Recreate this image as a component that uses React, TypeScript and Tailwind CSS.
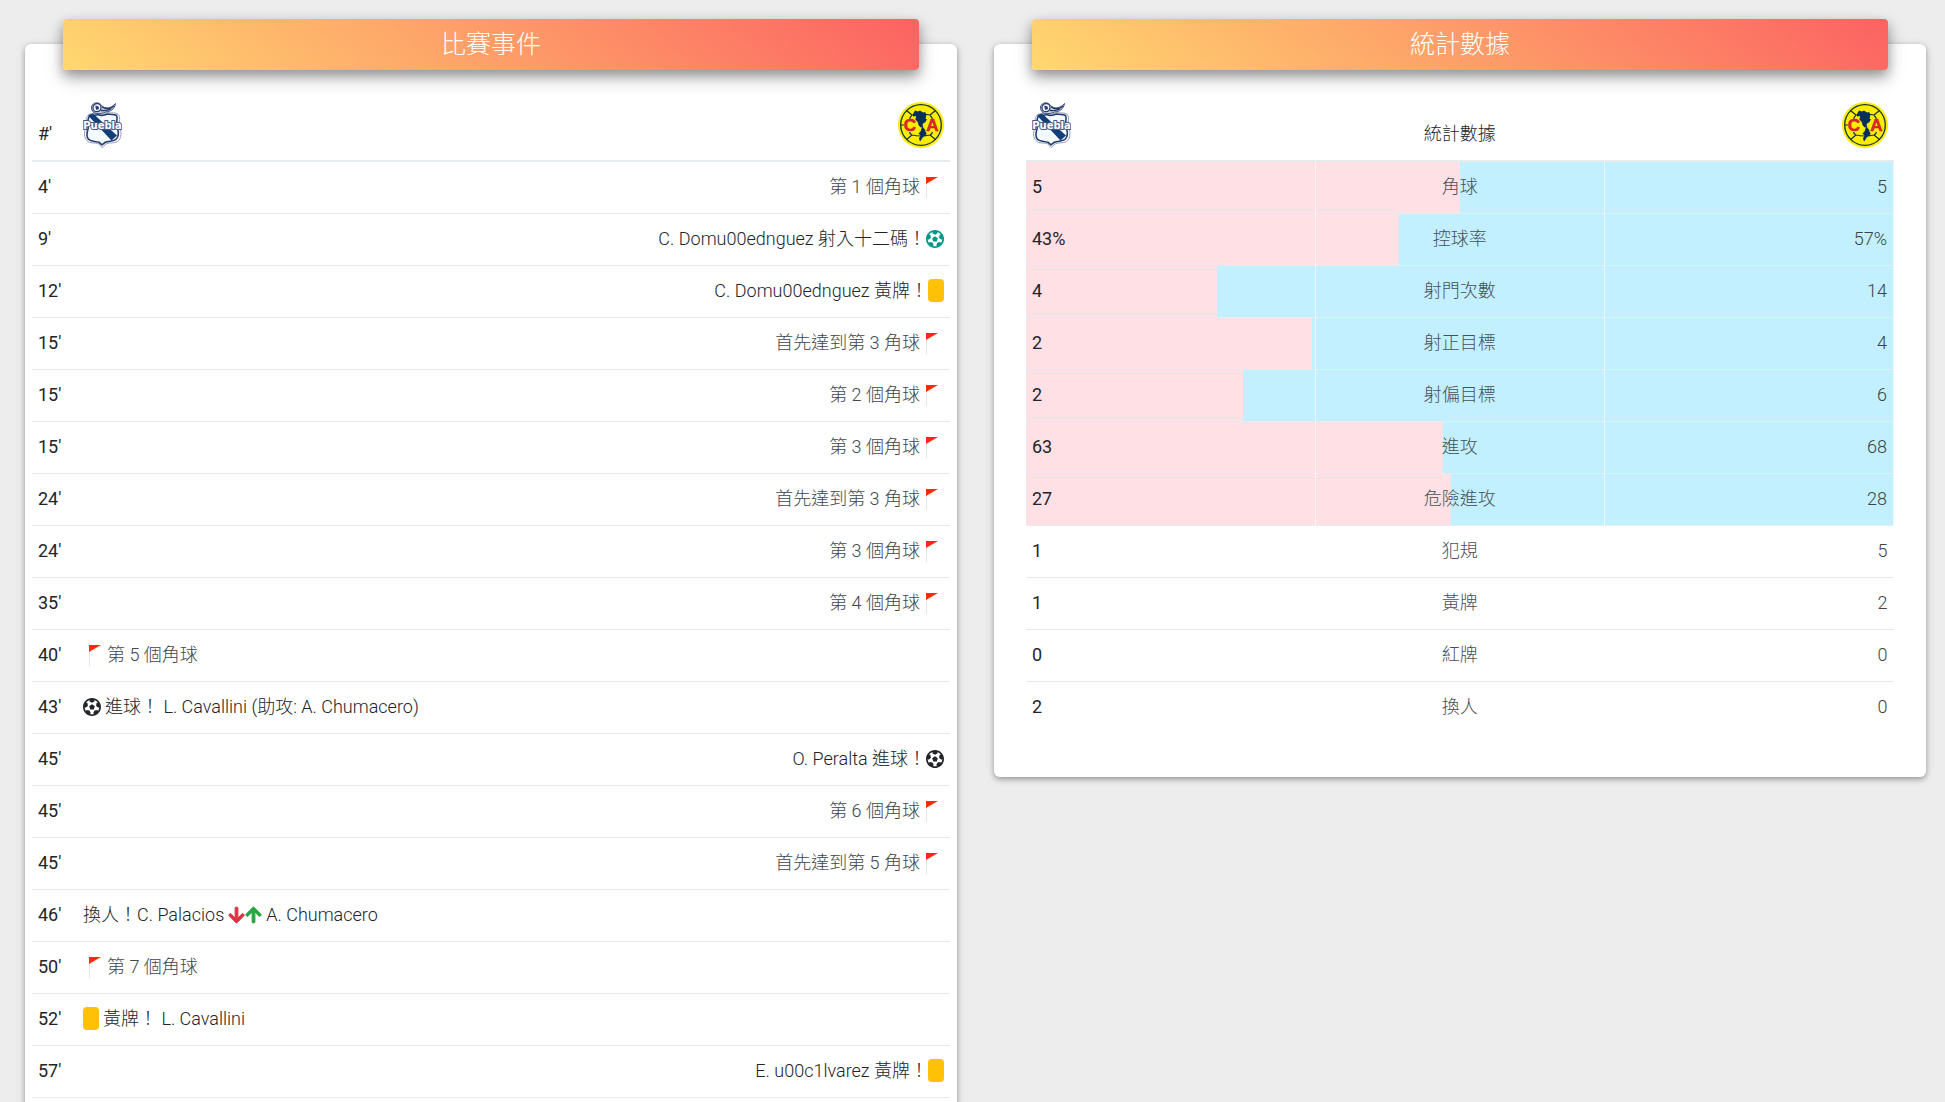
import type { ReactNode } from "react";

type Side = "home" | "away";
type Kind = "corner" | "goal" | "penalty" | "card";
type MatchEvent = { minute: string; side: Side; kind?: Kind; text: ReactNode };
type Stat = { home: string; label: string; away: string; share?: number };

const ARROW =
  "M413.1 222.5l22.2 22.2c9.4 9.4 9.4 24.6 0 33.9L241 473c-9.4 9.4-24.6 9.4-33.9 0L12.7 278.6c-9.4-9.4-9.4-24.6 0-33.9l22.2-22.2c9.5-9.5 25-9.3 34.3.4L184 343.4V56c0-13.3 10.7-24 24-24h32c13.3 0 24 10.7 24 24v287.4l114.8-120.500c9.3-9.8 24.8-10 34.3-.4z";

const BALL =
  "M504 256c0 136.967-111.033 248-248 248S8 392.967 8 256 119.033 8 256 8s248 111.033 248 248zm-48 0l-.003-.282-26.064 22.741-62.679-58.5 16.454-84.355 34.303 3.072c-24.889-34.216-60.004-60.089-100.709-73.141l13.651 31.939L256 139l-74.953-41.525 13.651-31.939c-40.631 13.028-75.78 38.87-100.709 73.141l34.565-3.073 16.192 84.355-62.678 58.5-26.064-22.741-.003.282c0 43.015 13.497 83.952 38.472 117.991l7.704-33.897 85.138 10.447 36.301 77.826-29.902 17.786c40.202 13.122 84.29 13.148 124.572 0l-29.902-17.786 36.301-77.826 85.138-10.447 7.704 33.897C442.503 339.952 456 299.015 456 256zm-248.102 69.571l-29.894-91.312L256 177.732l77.996 56.527-29.622 91.312h-96.476z";

function SubstitutionArrows() {
  return (
    <span className="flex">
      <svg viewBox="0 0 448 512" className="h-[18px] w-[17px] text-[#dc3545]" aria-label="out">
        <path d={ARROW} fill="currentColor" stroke="currentColor" strokeWidth="28" />
      </svg>
      <svg viewBox="0 0 448 512" className="h-[18px] w-[17px] text-[#28a745]" aria-label="in">
        <path d={ARROW} fill="currentColor" stroke="currentColor" strokeWidth="28" transform="rotate(180 224 256)" />
      </svg>
    </span>
  );
}

const events: MatchEvent[] = [
  { minute: "4'", side: "away", kind: "corner", text: "第 1 個角球" },
  { minute: "9'", side: "away", kind: "penalty", text: "C. Domu00ednguez 射入十二碼！" },
  { minute: "12'", side: "away", kind: "card", text: "C. Domu00ednguez 黃牌！" },
  { minute: "15'", side: "away", kind: "corner", text: "首先達到第 3 角球" },
  { minute: "15'", side: "away", kind: "corner", text: "第 2 個角球" },
  { minute: "15'", side: "away", kind: "corner", text: "第 3 個角球" },
  { minute: "24'", side: "away", kind: "corner", text: "首先達到第 3 角球" },
  { minute: "24'", side: "away", kind: "corner", text: "第 3 個角球" },
  { minute: "35'", side: "away", kind: "corner", text: "第 4 個角球" },
  { minute: "40'", side: "home", kind: "corner", text: "第 5 個角球" },
  { minute: "43'", side: "home", kind: "goal", text: "進球！ L. Cavallini (助攻: A. Chumacero)" },
  { minute: "45'", side: "away", kind: "goal", text: "O. Peralta 進球！" },
  { minute: "45'", side: "away", kind: "corner", text: "第 6 個角球" },
  { minute: "45'", side: "away", kind: "corner", text: "首先達到第 5 角球" },
  {
    minute: "46'",
    side: "home",
    text: (
      <span className="flex items-center gap-1">
        換人！C. Palacios
        <SubstitutionArrows />
        A. Chumacero
      </span>
    ),
  },
  { minute: "50'", side: "home", kind: "corner", text: "第 7 個角球" },
  { minute: "52'", side: "home", kind: "card", text: "黃牌！ L. Cavallini" },
  { minute: "57'", side: "away", kind: "card", text: "E. u00c1lvarez 黃牌！" },
];

const stats: Stat[] = [
  { home: "5", label: "角球", away: "5", share: 50 },
  { home: "43%", label: "控球率", away: "57%", share: 43 },
  { home: "4", label: "射門次數", away: "14", share: 22 },
  { home: "2", label: "射正目標", away: "4", share: 33 },
  { home: "2", label: "射偏目標", away: "6", share: 25 },
  { home: "63", label: "進攻", away: "68", share: 48 },
  { home: "27", label: "危險進攻", away: "28", share: 49 },
  { home: "1", label: "犯規", away: "5" },
  { home: "1", label: "黃牌", away: "2" },
  { home: "0", label: "紅牌", away: "0" },
  { home: "2", label: "換人", away: "0" },
];

function PueblaCrest() {
  return (
    <svg viewBox="0 0 39 46" className="block h-[46px] w-[39px]" role="img" aria-label="Puebla">
      <path
        d="M19 45.500l-3.500-3.800c-3.500-1.400-8.500.300-11.500-3-3-3.300-3-8-1.500-11.700l2-6C2 18.500 3.500 15 5.500 12.500c3.500-1.500 7-.5 9-1.500 4 2.500 7 .5 10-.5 4 1 8-.5 11 2 2 4 1 6 .500 8l1 6c1.500 4 1.500 9-1.500 12-3 3.300-8 1.600-12 3.200z"
        fill="#fff"
        stroke="#8f9cb8"
        strokeWidth="1"
      />
      <path
        d="M19 42.800l-3-2.500c-4-1.300-8-.3-10.500-3C3 34.500 4 30 5 27l1-6c-2-3-1-5 1-7.500 3-1 5 .5 8-1 4 2.300 6 .5 9.500-.500 4 1 6 0 9 1.500 1.500 3.500.5 5 0 7l1 6c1.300 4 1 8-1.200 10.500-2.500 2.700-7 1.700-11 3.300z"
        fill="#f4fbff"
        stroke="#243a70"
        strokeWidth="1.600"
      />
      <path d="M5 13.500l5-2 24 22-5.500 5z" fill="#123f79" />
      <path d="M8.500 5c1-5 8-5.500 10-1.500 4 3.500 9 3.500 14-2-1 6-5 8-10 8.500-5 2.500-14 3.500-14-5z" fill="#c5cfdf" stroke="#3b4a78" strokeWidth="1" />
      <path d="M19 5c4 2.500 8 2.500 12-1M18 8.500c4 .5 7 0 10-1.500" fill="none" stroke="#243a70" strokeWidth="1.300" />
      <circle cx="14" cy="5.700" r="4" fill="#fff" stroke="#243a70" strokeWidth="1.200" />
      <path d="M12.500 3.500l3 1 .5 2.500-2.500 1-1-2z" fill="#243a70" />
      <text
        x="19.500"
        y="27"
        textAnchor="middle"
        fill="#fff"
        stroke="#4a5a88"
        strokeWidth="2"
        paintOrder="stroke"
        className="font-['DejaVu_Sans'] text-[10px] font-bold"
      >
        Puebla
      </text>
    </svg>
  );
}

function AmericaCrest() {
  return (
    <svg viewBox="0 0 46 46" className="block size-[46px]" role="img" aria-label="Club América">
      <circle cx="23" cy="23" r="23" fill="#ffec00" />
      <circle cx="23" cy="23" r="20.300" fill="none" stroke="#12324a" strokeWidth="1.300" />
      <path
        d="M14 13L8.500 8.500M32 13l5.500-4.500M14 33l-5.500 4.500M32 33l5.500 4.500M14 13q-2 2-2.500 5M32 13q2 2 2.500 5M11.500 30q.5 2 2.500 3 9 2 18 0 2-1 2.500-3M14 13q9-2 18 0M3 23h3"
        fill="none"
        stroke="#12324a"
        strokeWidth="1.200"
      />
      <path
        d="M15 12l2-3.500 3 1 2-1 3 2 2-.5 1.500 3-1 3.500 1.500 1-2 3-2 1-1 3-1.500 1-2-2.500-1-3.500-2-1.500.5-4-3 .5z"
        fill="#06305a"
      />
      <path d="M24 22l1.500 4 1.500 1.500.5 2 1 2-.5 2-3 1.500-1.500 2.500-1.500 2-1-3 1.500-3-2-2 2-2 1-3z" fill="#06305a" />
      <text x="12" y="29" textAnchor="middle" fill="#e8232b" stroke="#a8242d" strokeWidth="0.500" className="font-['Liberation_Sans'] text-[17px] font-bold">
        C
      </text>
      <text x="34.500" y="29" textAnchor="middle" fill="#e8232b" stroke="#a8242d" strokeWidth="0.500" className="font-['Liberation_Sans'] text-[17px] font-bold">
        A
      </text>
    </svg>
  );
}

function EventIcon({ kind }: { kind: Kind }) {
  if (kind === "corner") {
    return (
      <svg viewBox="0 -2 16 23" className="h-[23px] w-4 shrink-0" aria-hidden="true">
        <path d="M2 0h1v21H2z" fill="#e4e4e4" />
        <path d="M2 0h12L2 7z" fill="#fb2a0b" />
      </svg>
    );
  }
  if (kind === "card") {
    return <span className="h-[23px] w-4 shrink-0 rounded-sm bg-[#ffc107]" />;
  }
  return (
    <svg
      viewBox="8 8 496 496"
      className={kind === "penalty" ? "size-[18px] shrink-0 text-[#009688]" : "size-[18px] shrink-0 text-[#212529]"}
      aria-hidden="true"
    >
      <path d={BALL} fill="currentColor" />
    </svg>
  );
}

function Panel({ title, children }: { title: string; children: ReactNode }) {
  return (
    <section className="min-w-0 flex-1 rounded-md bg-white shadow-[0_2px_5px_rgba(0,0,0,0.26),0_2px_10px_rgba(0,0,0,0.16)]">
      <h2 className="mx-[38px] -mt-[25px] rounded bg-[linear-gradient(40deg,#ffd86f,#fc6262)] py-2 text-center text-[25px] leading-[35px] font-extralight text-white shadow-[0_5px_11px_rgba(0,0,0,0.25),0_8px_18px_rgba(0,0,0,0.25)]">
        {title}
      </h2>
      {children}
    </section>
  );
}

function EventsTable() {
  return (
    <div className="px-[7px] pt-5 pb-11">
      <table className="w-full text-left">
        <thead>
          <tr className="border-b-2 border-[#e6ebee] align-bottom">
            <th scope="col" className="w-[45px] pt-[11px] pb-[13px] pl-1.5 font-normal">#'</th>
            <th scope="col" className="py-3 pl-1.5">
              <PueblaCrest />
            </th>
            <th scope="col" className="py-3 pr-1.5">
              <div className="flex justify-end">
                <AmericaCrest />
              </div>
            </th>
          </tr>
        </thead>
        <tbody>
          {events.map((event, index) => (
            <tr key={index} className="border-b border-[#e9e9e9]">
              <th scope="row" className="pt-[11px] pb-[13px] pl-1.5 font-normal">{event.minute}</th>
              <td className="pt-[11px] pb-[13px] pl-1.5">
                {event.side === "home" && (
                  <div
                    className={
                      event.kind === "corner"
                        ? "flex h-[27px] items-center gap-1 pl-1 text-[#40464b]"
                        : "flex h-[27px] items-center gap-1"
                    }
                  >
                    {event.kind && <EventIcon kind={event.kind} />}
                    <span>{event.text}</span>
                  </div>
                )}
              </td>
              <td className="pt-[11px] pb-[13px] pr-1.5">
                {event.side === "away" && (
                  <div
                    className={
                      event.kind === "corner"
                        ? "flex h-[27px] items-center justify-end gap-1 pr-1 text-[#40464b]"
                        : "flex h-[27px] items-center justify-end"
                    }
                  >
                    <span>{event.text}</span>
                    {event.kind && <EventIcon kind={event.kind} />}
                  </div>
                )}
              </td>
            </tr>
          ))}
        </tbody>
      </table>
    </div>
  );
}

function StatsTable() {
  return (
    <div className="px-8 pt-5 pb-11">
      <table className="w-full table-fixed">
        <thead>
          <tr className="border-b-2 border-[#e6ebee] align-bottom">
            <th scope="col" className="px-1.5 py-3">
              <PueblaCrest />
            </th>
            <th scope="col" className="px-1.5 pt-[11px] pb-[13px] font-light">統計數據</th>
            <th scope="col" className="px-1.5 py-3">
              <div className="flex justify-end">
                <AmericaCrest />
              </div>
            </th>
          </tr>
        </thead>
        <tbody>
          {stats.map(({ home, label, away, share }) => (
            <tr
              key={label}
              className={
                share === undefined
                  ? "border-b border-[#e9e9e9] last:border-b-0"
                  : "border-b border-[#e4edf0] [&>*]:border-r [&>*]:border-r-white/60"
              }
              style={
                share === undefined
                  ? undefined
                  : { backgroundImage: `linear-gradient(to right, #ffe0e4 ${share}%, #c2f0ff ${share}%)` }
              }
            >
              <td className="px-1.5 pt-[11px] pb-[13px] text-left font-normal">{home}</td>
              <th scope="row" className="px-1.5 pt-[11px] pb-[13px] text-center font-light text-[#495057]">{label}</th>
              <td className="px-1.5 pt-[11px] pb-[13px] text-right text-[#3c4348]">{away}</td>
            </tr>
          ))}
        </tbody>
      </table>
    </div>
  );
}

export default function App() {
  return (
    <main className="flex h-screen items-start gap-[37px] overflow-hidden bg-[#ededed] pt-11 pr-[19px] pl-[25px] font-[Roboto,'Noto_Sans_CJK_TC',sans-serif] text-[18px] leading-[27px] font-light text-[#212529]">
      <Panel title="比賽事件">
        <EventsTable />
      </Panel>
      <Panel title="統計數據">
        <StatsTable />
      </Panel>
    </main>
  );
}
